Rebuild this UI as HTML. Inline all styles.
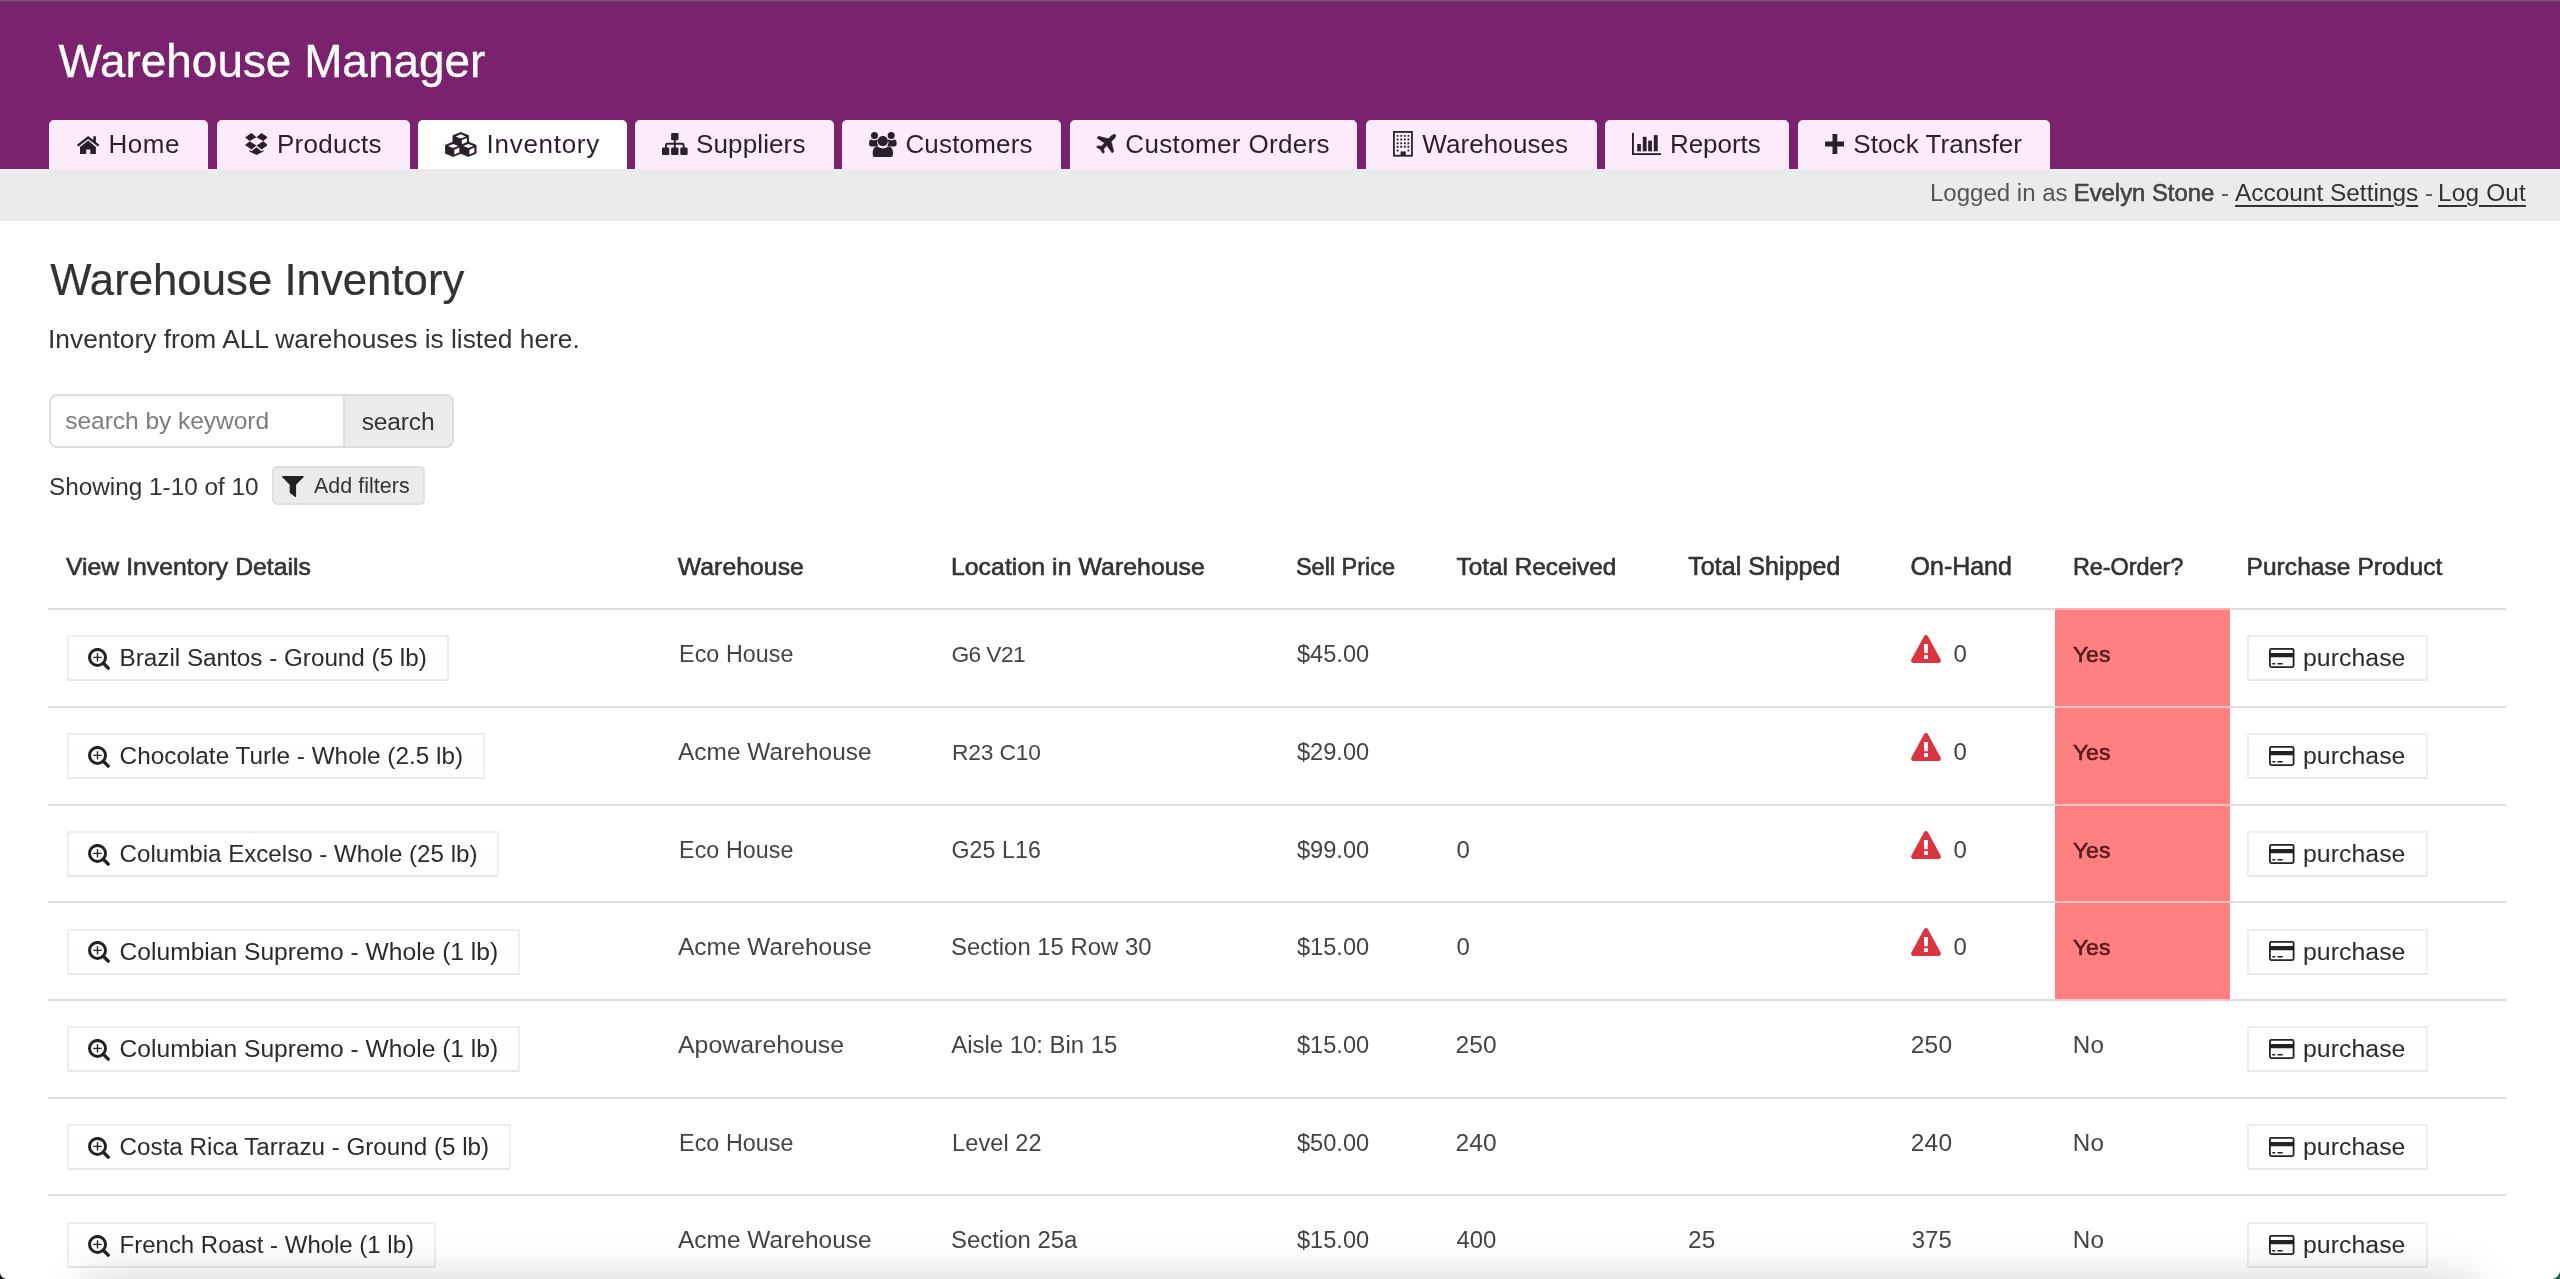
<!DOCTYPE html>
<html lang="en"><head><meta charset="utf-8"><title>Warehouse Manager - Warehouse Inventory</title>
<style>
html,body{margin:0;padding:0;}
body{width:2560px;height:1279px;overflow:hidden;background:#fff;position:relative;font-family:"Liberation Sans", sans-serif;color:#333;}
#page{position:absolute;left:0;top:0;width:2560px;height:1279px;overflow:hidden;will-change:transform;}
#hdr{position:absolute;left:0;top:0;width:2560px;height:168.5px;background:#7a226e;}
#topline{position:absolute;left:0;top:0;width:2560px;height:3px;background:linear-gradient(#765a7a 0,#765a7a 1px,#6f3565 1.5px,#73275f 2px,#7a226e 3px);}
#ubar{position:absolute;left:0;top:168.5px;width:2560px;height:52.7px;background:#ebebeb;}
.tab{position:absolute;top:119.5px;height:49.5px;background:#fbebfb;border-radius:5px 5px 0 0;color:#2b1f2b;}
.tab.on{background:#fff;}
.sb{-webkit-text-stroke:0.62px currentColor;}
.btn{position:absolute;box-sizing:border-box;height:46px;border:2px solid #eeeeee;border-bottom-color:#e8e8e8;border-radius:2px;background:linear-gradient(#fff,#fdfdfd);}
.line{position:absolute;left:48px;width:2458px;height:2px;background:#dedede;}
a{color:inherit;text-decoration:none;}
h1,h2,p{margin:0;font-weight:400;}

</style></head><body><div id="page">
<div id="hdr"></div><div id="topline"></div><div id="ubar"></div>
<h1 style="position:absolute;white-space:nowrap;left:58.40px;top:39px;font-size:45.86px;line-height:45.86px;color:#fff;letter-spacing:0.019px;-webkit-text-stroke:0.35px #fff;">Warehouse Manager</h1>
<div class="tab" style="left:49px;width:159px"></div>
<svg width="22.3" height="18.3" viewBox="0 0 22.3 18.3" style="position:absolute;left:76.9px;top:135.5px;color:#2b1f2b;"><path fill="currentColor" d="M11.15 0.1 L-0.1 8.9 L1.4 10.6 L11.15 3 L20.9 10.6 L22.4 8.9 L18.9 6.1 V0.2 H16.3 V4.1 Z"/><path fill="currentColor" d="M11.15 4.5 L3 10.9 V17.5 Q3 18.3 3.8 18.3 H9.2 V13.6 H13.3 V18.3 H18.1 Q18.9 18.3 18.9 17.5 V10.9 Z"/></svg>
<a style="position:absolute;white-space:nowrap;left:108.60px;top:131px;font-size:26.0px;line-height:26.0px;color:#2b1f2b;letter-spacing:0.5px;">Home</a>
<div class="tab" style="left:216.5px;width:193.5px"></div>
<svg width="22.9" height="22" viewBox="0 0 22.9 22" style="position:absolute;left:244.5px;top:133.3px;color:#2b1f2b;"><path fill="currentColor" d="M6.4 0 L0 4.4 L4.7 8.1 L11.45 4.2 Z M16.5 0 L22.9 4.4 L18.2 8.1 L11.45 4.2 Z M0 12 L4.7 8.3 L11.45 12.6 L6.4 16.6 Z M22.9 12 L18.2 8.3 L11.45 12.6 L16.5 16.6 Z M11.45 14.2 L6.5 18.2 L4.4 16.9 V18.4 L11.45 22 L18.5 18.4 V16.9 L16.4 18.2 Z"/></svg>
<a style="position:absolute;white-space:nowrap;left:277.00px;top:131px;font-size:26.0px;line-height:26.0px;color:#2b1f2b;letter-spacing:0.256px;">Products</a>
<div class="tab on" style="left:418px;width:209px"></div>
<svg width="31.5" height="25" viewBox="0 0 31.5 25" style="position:absolute;left:445.2px;top:131.8px;color:#2b1f2b;"><polygon fill="currentColor" stroke="currentColor" stroke-width="0.8" stroke-linejoin="round" points="15.75,0.40 23.55,3.60 23.55,11.70 15.75,15.00 7.95,11.70 7.95,3.60"/><polygon fill="#fff" points="15.75,2.30 20.85,4.40 15.75,6.50 10.65,4.40"/><polygon fill="#fff" points="16.85,8.10 21.85,6.00 21.85,10.70 16.85,12.90"/><polygon fill="currentColor" stroke="currentColor" stroke-width="0.8" stroke-linejoin="round" points="8.20,10.00 16.00,13.20 16.00,21.30 8.20,24.60 0.40,21.30 0.40,13.20"/><polygon fill="#fff" points="8.20,11.90 13.30,14.00 8.20,16.10 3.10,14.00"/><polygon fill="#fff" points="9.30,17.70 14.30,15.60 14.30,20.30 9.30,22.50"/><polygon fill="currentColor" stroke="currentColor" stroke-width="0.8" stroke-linejoin="round" points="23.30,10.00 31.10,13.20 31.10,21.30 23.30,24.60 15.50,21.30 15.50,13.20"/><polygon fill="#fff" points="23.30,11.90 28.40,14.00 23.30,16.10 18.20,14.00"/><polygon fill="#fff" points="24.40,17.70 29.40,15.60 29.40,20.30 24.40,22.50"/></svg>
<a style="position:absolute;white-space:nowrap;left:486.60px;top:131px;font-size:26.0px;line-height:26.0px;color:#2b1f2b;letter-spacing:0.706px;">Inventory</a>
<div class="tab" style="left:635px;width:199px"></div>
<svg width="25.6" height="21.9" viewBox="0 0 25.6 21.9" style="position:absolute;left:662.1px;top:133.4px;color:#2b1f2b;"><g fill="currentColor"><rect x="9.1" y="0" width="7.4" height="7.3" rx="1.2"/><rect x="0" y="14.6" width="7.3" height="7.3" rx="1.2"/><rect x="9.1" y="14.6" width="7.4" height="7.3" rx="1.2"/><rect x="18.3" y="14.6" width="7.3" height="7.3" rx="1.2"/></g><path fill="none" stroke="currentColor" stroke-width="1.9" d="M12.8 7 V15 M3.95 15 V12.2 Q3.95 10.8 5.3 10.8 H20.3 Q21.65 10.8 21.65 12.2 V15"/></svg>
<a style="position:absolute;white-space:nowrap;left:696.10px;top:131px;font-size:26.0px;line-height:26.0px;color:#2b1f2b;letter-spacing:0.112px;">Suppliers</a>
<div class="tab" style="left:842px;width:219px"></div>
<svg width="27.7" height="25.4" viewBox="0 0 27.7 25.4" style="position:absolute;left:869.1px;top:131.6px;color:#2b1f2b;"><g fill="currentColor"><circle cx="5.5" cy="3.6" r="3.5"/><circle cx="22.2" cy="3.6" r="3.5"/><path d="M0.1 12.6 V10.6 Q0.1 7.6 2.4 7.4 Q5.5 9.2 8.4 7.5 L9 8 Q7.2 11.2 9.6 13.9 Q7 14.4 5.6 14.4 H2.2 Q0.1 14.4 0.1 12.6 Z"/><path d="M27.6 12.6 V10.6 Q27.6 7.6 25.3 7.4 Q22.2 9.2 19.3 7.5 L18.7 8 Q20.5 11.2 18.1 13.9 Q20.7 14.4 22.1 14.4 H25.5 Q27.6 14.4 27.6 12.6 Z"/><circle cx="13.85" cy="9.1" r="5.1"/><path d="M3.7 21.4 Q3.7 15.2 7.6 14.5 Q8.6 14.4 9.3 15.1 Q11.2 16.6 13.85 16.6 Q16.5 16.6 18.4 15.1 Q19.1 14.4 20.1 14.5 Q24 15.2 24 21.4 V22.3 Q24 25.4 20.9 25.4 H6.8 Q3.7 25.4 3.7 22.3 Z"/></g></svg>
<a style="position:absolute;white-space:nowrap;left:905.40px;top:131px;font-size:26.0px;line-height:26.0px;color:#2b1f2b;letter-spacing:0.175px;">Customers</a>
<div class="tab" style="left:1069.5px;width:287.5px"></div>
<svg width="20" height="20" viewBox="0 0 20 20" style="position:absolute;left:1096.3px;top:133.5px;color:#2b1f2b;"><path fill="currentColor" stroke="currentColor" stroke-width="0.6" stroke-linejoin="round" d="M19.4 0.6 Q17.4 -0.2 15.2 1.9 L12.5 4.8 L2.6 2.3 L1 3.9 L8.6 9 L5.3 12.3 L1.8 11.8 L0.5 13.1 L4.4 15.6 L6.9 19.5 L8.2 18.2 L7.7 14.7 L11 11.4 L16.1 19 L17.7 17.4 L15.2 7.5 L18.1 4.8 Q20.2 2.6 19.4 0.6 Z"/></svg>
<a style="position:absolute;white-space:nowrap;left:1125.30px;top:131px;font-size:26.0px;line-height:26.0px;color:#2b1f2b;letter-spacing:0.351px;">Customer Orders</a>
<div class="tab" style="left:1365.5px;width:231.0px"></div>
<svg width="19.9" height="25.7" viewBox="0 0 19.9 25.7" style="position:absolute;left:1393.2px;top:131.3px;color:#2b1f2b;"><rect x="0.95" y="0.95" width="18" height="23.8" fill="#fdf5fd" stroke="currentColor" stroke-width="1.8"/><g fill="currentColor"><rect x="3.65" y="3.95" width="1.9" height="1.9" rx="0.5"/><rect x="7.25" y="3.95" width="1.9" height="1.9" rx="0.5"/><rect x="10.85" y="3.95" width="1.9" height="1.9" rx="0.5"/><rect x="14.45" y="3.95" width="1.9" height="1.9" rx="0.5"/><rect x="3.65" y="7.60" width="1.9" height="1.9" rx="0.5"/><rect x="7.25" y="7.60" width="1.9" height="1.9" rx="0.5"/><rect x="10.85" y="7.60" width="1.9" height="1.9" rx="0.5"/><rect x="14.45" y="7.60" width="1.9" height="1.9" rx="0.5"/><rect x="3.65" y="11.25" width="1.9" height="1.9" rx="0.5"/><rect x="7.25" y="11.25" width="1.9" height="1.9" rx="0.5"/><rect x="10.85" y="11.25" width="1.9" height="1.9" rx="0.5"/><rect x="14.45" y="11.25" width="1.9" height="1.9" rx="0.5"/><rect x="3.65" y="14.85" width="1.9" height="1.9" rx="0.5"/><rect x="7.25" y="14.85" width="1.9" height="1.9" rx="0.5"/><rect x="10.85" y="14.85" width="1.9" height="1.9" rx="0.5"/><rect x="14.45" y="14.85" width="1.9" height="1.9" rx="0.5"/><rect x="3.65" y="18.55" width="1.9" height="1.9" rx="0.5"/><rect x="14.45" y="18.55" width="1.9" height="1.9" rx="0.5"/><rect x="7.6" y="20.4" width="5.2" height="4.6"/></g></svg>
<a style="position:absolute;white-space:nowrap;left:1422.30px;top:131px;font-size:26.0px;line-height:26.0px;color:#2b1f2b;letter-spacing:0.089px;">Warehouses</a>
<div class="tab" style="left:1604.5px;width:184.5px"></div>
<svg width="29" height="22" viewBox="0 0 29 22" style="position:absolute;left:1631.9px;top:133.2px;color:#2b1f2b;"><g fill="currentColor"><rect x="0" y="0" width="1.9" height="22"/><rect x="0" y="20.2" width="29" height="1.8"/><rect x="5.2" y="11" width="3.7" height="7.3"/><rect x="10.8" y="3.8" width="3.8" height="14.5"/><rect x="16.2" y="7.6" width="3.7" height="10.7"/><rect x="21.8" y="2.1" width="3.9" height="16.2"/></g></svg>
<a style="position:absolute;white-space:nowrap;left:1669.90px;top:131px;font-size:26.0px;line-height:26.0px;color:#2b1f2b;letter-spacing:-0.024px;">Reports</a>
<div class="tab" style="left:1797.5px;width:252.5px"></div>
<svg width="19.8" height="20" viewBox="0 0 20 20" style="position:absolute;left:1824.5px;top:133.8px;color:#2b1f2b;"><path fill="currentColor" d="M7.6 0 H12.4 V7.6 H20 V12.4 H12.4 V20 H7.6 V12.4 H0 V7.6 H7.6 Z"/></svg>
<a style="position:absolute;white-space:nowrap;left:1853.30px;top:131px;font-size:26.0px;line-height:26.0px;color:#2b1f2b;letter-spacing:0.079px;">Stock Transfer</a>
<div style="position:absolute;white-space:nowrap;left:1930.00px;top:181px;font-size:24.05px;line-height:24.05px;color:#555;letter-spacing:-0.009px;">Logged in as</div>
<div class="sb" style="position:absolute;white-space:nowrap;left:2073.80px;top:181px;font-size:23.85px;line-height:23.85px;color:#444;letter-spacing:-0.005px;">Evelyn Stone</div>
<div style="position:absolute;white-space:nowrap;left:2221.00px;top:181px;font-size:24.2px;line-height:24.2px;color:#555;">-</div>
<div style="position:absolute;white-space:nowrap;left:2235.00px;top:181px;font-size:24.41px;line-height:24.41px;color:#333;letter-spacing:0.003px;"><a style="text-decoration:underline;text-decoration-thickness:1.6px;text-underline-offset:3.5px">Account Settings</a></div>
<div style="position:absolute;white-space:nowrap;left:2425.00px;top:181px;font-size:24.2px;line-height:24.2px;color:#555;">-</div>
<div style="position:absolute;white-space:nowrap;left:2438.00px;top:181px;font-size:24.39px;line-height:24.39px;color:#333;letter-spacing:0.173px;"><a style="text-decoration:underline;text-decoration-thickness:1.6px;text-underline-offset:3.5px">Log Out</a></div>
<h2 style="position:absolute;white-space:nowrap;left:50.20px;top:258px;font-size:43.68px;line-height:43.68px;color:#333;letter-spacing:0.036px;-webkit-text-stroke:0.2px #333;">Warehouse Inventory</h2>
<p style="position:absolute;white-space:nowrap;left:48.00px;top:326px;font-size:26.33px;line-height:26.33px;color:#333;letter-spacing:0.002px;">Inventory from ALL warehouses is listed here.</p>
<div style="position:absolute;left:49px;top:393.5px;width:405px;height:54.5px;box-sizing:border-box;border:2px solid #dedede;border-radius:8px;background:#fff;box-shadow:inset 0 2px 2px rgba(0,0,0,.04)"></div>
<div style="position:absolute;left:343px;top:393.5px;width:111px;height:54.5px;box-sizing:border-box;border:2px solid #dedede;border-radius:0 8px 8px 0;background:#ebebeb"></div>
<div style="position:absolute;white-space:nowrap;left:65.20px;top:409px;font-size:24.57px;line-height:24.57px;color:#7d7d7d;letter-spacing:-0.051px;">search by keyword</div>
<div style="position:absolute;white-space:nowrap;left:361.70px;top:410px;font-size:24.59px;line-height:24.59px;color:#333;letter-spacing:-0.162px;">search</div>
<div style="position:absolute;white-space:nowrap;left:49.00px;top:475px;font-size:24.32px;line-height:24.32px;color:#333;">Showing 1-10 of 10</div>
<div style="position:absolute;left:272px;top:465.5px;width:153px;height:39px;box-sizing:border-box;border:2px solid #e0e0e0;border-radius:5px;background:#ebebeb"></div>
<svg width="21.8" height="21.1" viewBox="0 0 21.8 21.1" style="position:absolute;left:282.4px;top:476px;"><path fill="#222" d="M0.6 0 H21.2 Q22.2 0.3 21.5 1.2 L14.1 8.8 V20.4 Q13.9 21.4 13 20.8 L8 16.9 Q7.7 16.6 7.7 16.2 V8.8 L0.3 1.2 Q-0.4 0.3 0.6 0 Z"/></svg>
<div style="position:absolute;white-space:nowrap;left:314.00px;top:476px;font-size:21.42px;line-height:21.42px;color:#333;letter-spacing:0.052px;">Add filters</div>
<div class="sb" style="position:absolute;white-space:nowrap;left:65.90px;top:555px;font-size:24.78px;line-height:24.78px;color:#333;letter-spacing:0.025px;">View Inventory Details</div>
<div class="sb" style="position:absolute;white-space:nowrap;left:677.80px;top:555px;font-size:24.75px;line-height:24.75px;color:#333;letter-spacing:0.051px;">Warehouse</div>
<div class="sb" style="position:absolute;white-space:nowrap;left:950.90px;top:555px;font-size:24.78px;line-height:24.78px;color:#333;letter-spacing:0.078px;">Location in Warehouse</div>
<div class="sb" style="position:absolute;white-space:nowrap;left:1295.90px;top:556px;font-size:23.54px;line-height:23.54px;color:#333;letter-spacing:-0.023px;">Sell Price</div>
<div class="sb" style="position:absolute;white-space:nowrap;left:1456.50px;top:555px;font-size:24.33px;line-height:24.33px;color:#333;letter-spacing:0.012px;">Total Received</div>
<div class="sb" style="position:absolute;white-space:nowrap;left:1688.30px;top:554px;font-size:24.96px;line-height:24.96px;color:#333;letter-spacing:0.072px;">Total Shipped</div>
<div class="sb" style="position:absolute;white-space:nowrap;left:1910.60px;top:554px;font-size:24.96px;line-height:24.96px;color:#333;letter-spacing:0.002px;">On-Hand</div>
<div class="sb" style="position:absolute;white-space:nowrap;left:2072.90px;top:556px;font-size:23.44px;line-height:23.44px;color:#333;letter-spacing:-0.035px;">Re-Order?</div>
<div class="sb" style="position:absolute;white-space:nowrap;left:2246.50px;top:555px;font-size:24.49px;line-height:24.49px;color:#333;letter-spacing:0.079px;">Purchase Product</div>
<div style="position:absolute;left:2055px;top:609px;width:175px;height:390.00px;background:#ff8080"></div>
<div class="line" style="top:608px"></div>
<div style="position:absolute;left:2055px;top:608px;width:175px;height:2px;background:#ffb0b0"></div>
<div class="line" style="top:706px"></div>
<div style="position:absolute;left:2055px;top:706px;width:175px;height:2px;background:#ffc4c4"></div>
<div class="line" style="top:804px"></div>
<div style="position:absolute;left:2055px;top:804px;width:175px;height:2px;background:#ffc4c4"></div>
<div class="line" style="top:901px"></div>
<div style="position:absolute;left:2055px;top:901px;width:175px;height:2px;background:#ffc4c4"></div>
<div class="line" style="top:999px"></div>
<div style="position:absolute;left:2055px;top:999px;width:175px;height:2px;background:#ffc4c4"></div>
<div class="line" style="top:1097px"></div>
<div class="line" style="top:1194px"></div>
<div class="line" style="top:1292px"></div>
<div class="btn" style="left:67px;top:635px;width:382px"></div>
<svg width="22" height="22" viewBox="0 0 22 22" style="position:absolute;left:88px;top:648.00px;"><circle cx="9.5" cy="9.4" r="8" fill="none" stroke="#222" stroke-width="3"/><path d="M15.4 15.3 L20.2 20.1" stroke="#222" stroke-width="3.4" stroke-linecap="round"/><path d="M9.5 5.2 V13.6 M5.3 9.4 H13.7" stroke="#222" stroke-width="1.4"/></svg>
<a style="position:absolute;white-space:nowrap;left:119.60px;top:646px;font-size:24.25px;line-height:24.25px;color:#2b2b2b;letter-spacing:-0.003px;">Brazil Santos - Ground (5 lb)</a>
<div style="position:absolute;white-space:nowrap;left:679.10px;top:643px;font-size:23.24px;line-height:23.24px;color:#444;letter-spacing:0.083px;">Eco House</div>
<div style="position:absolute;white-space:nowrap;left:951.50px;top:643px;font-size:22.8px;line-height:22.8px;color:#444;letter-spacing:-0.627px;">G6 V21</div>
<div style="position:absolute;white-space:nowrap;left:1297.00px;top:643px;font-size:23.65px;line-height:23.65px;color:#444;letter-spacing:-0.033px;">$45.00</div>
<svg width="30" height="28" viewBox="0 0 30 28" style="position:absolute;left:1911px;top:635.00px;"><path fill="#db3340" fill-rule="evenodd" d="M15 0 Q16.3 0 17 1.2 L29.6 24.6 Q30.2 25.8 29.6 26.8 Q29 28 27.6 28 H2.4 Q1 28 0.4 26.8 Q-0.2 25.8 0.4 24.6 L13 1.2 Q13.7 0 15 0 Z M12.9 9 L13.3 18.2 H16.7 L17.1 9 Z M13 20.2 V24 H17 V20.2 Z"/></svg>
<div style="position:absolute;white-space:nowrap;left:1953.40px;top:642px;font-size:24px;line-height:24px;color:#444;">0</div>
<div class="sb" style="position:absolute;white-space:nowrap;left:2072.90px;top:643px;font-size:22.98px;line-height:22.98px;color:#561a1e;">Yes</div>
<div class="btn" style="left:2247px;top:635px;width:181px"></div>
<svg width="25.5" height="20" viewBox="0 0 25.5 20" style="position:absolute;left:2269.25px;top:648.00px;"><path fill="#222" fill-rule="evenodd" d="M2.4 0 H23.1 Q25.5 0 25.5 2.4 V17.6 Q25.5 20 23.1 20 H2.4 Q0 20 0 17.6 V2.4 Q0 0 2.4 0 Z M1.8 2.4 V5 H23.7 V2.4 Q23.7 1.8 23.1 1.8 H2.4 Q1.8 1.8 1.8 2.4 Z M1.8 9.3 V17.6 Q1.8 18.2 2.4 18.2 H23.1 Q23.7 18.2 23.7 17.6 V9.3 Z M3.3 15.1 H6.3 V16.6 H3.3 Z M8.5 15.1 H13.7 V16.6 H8.5 Z"/></svg>
<a style="position:absolute;white-space:nowrap;left:2303.00px;top:646px;font-size:24.83px;line-height:24.83px;color:#2b2b2b;letter-spacing:0.038px;">purchase</a>
<div class="btn" style="left:67px;top:733px;width:418px"></div>
<svg width="22" height="22" viewBox="0 0 22 22" style="position:absolute;left:88px;top:745.75px;"><circle cx="9.5" cy="9.4" r="8" fill="none" stroke="#222" stroke-width="3"/><path d="M15.4 15.3 L20.2 20.1" stroke="#222" stroke-width="3.4" stroke-linecap="round"/><path d="M9.5 5.2 V13.6 M5.3 9.4 H13.7" stroke="#222" stroke-width="1.4"/></svg>
<a style="position:absolute;white-space:nowrap;left:119.60px;top:744px;font-size:24.34px;line-height:24.34px;color:#2b2b2b;letter-spacing:0.002px;">Chocolate Turle - Whole (2.5 lb)</a>
<div style="position:absolute;white-space:nowrap;left:678.00px;top:740px;font-size:24.44px;line-height:24.44px;color:#444;letter-spacing:0.02px;">Acme Warehouse</div>
<div style="position:absolute;white-space:nowrap;left:952.10px;top:741px;font-size:22.8px;line-height:22.8px;color:#444;letter-spacing:-0.184px;">R23 C10</div>
<div style="position:absolute;white-space:nowrap;left:1297.00px;top:741px;font-size:23.65px;line-height:23.65px;color:#444;letter-spacing:-0.033px;">$29.00</div>
<svg width="30" height="28" viewBox="0 0 30 28" style="position:absolute;left:1911px;top:732.75px;"><path fill="#db3340" fill-rule="evenodd" d="M15 0 Q16.3 0 17 1.2 L29.6 24.6 Q30.2 25.8 29.6 26.8 Q29 28 27.6 28 H2.4 Q1 28 0.4 26.8 Q-0.2 25.8 0.4 24.6 L13 1.2 Q13.7 0 15 0 Z M12.9 9 L13.3 18.2 H16.7 L17.1 9 Z M13 20.2 V24 H17 V20.2 Z"/></svg>
<div style="position:absolute;white-space:nowrap;left:1953.40px;top:740px;font-size:24px;line-height:24px;color:#444;">0</div>
<div class="sb" style="position:absolute;white-space:nowrap;left:2072.90px;top:741px;font-size:22.98px;line-height:22.98px;color:#561a1e;">Yes</div>
<div class="btn" style="left:2247px;top:733px;width:181px"></div>
<svg width="25.5" height="20" viewBox="0 0 25.5 20" style="position:absolute;left:2269.25px;top:745.75px;"><path fill="#222" fill-rule="evenodd" d="M2.4 0 H23.1 Q25.5 0 25.5 2.4 V17.6 Q25.5 20 23.1 20 H2.4 Q0 20 0 17.6 V2.4 Q0 0 2.4 0 Z M1.8 2.4 V5 H23.7 V2.4 Q23.7 1.8 23.1 1.8 H2.4 Q1.8 1.8 1.8 2.4 Z M1.8 9.3 V17.6 Q1.8 18.2 2.4 18.2 H23.1 Q23.7 18.2 23.7 17.6 V9.3 Z M3.3 15.1 H6.3 V16.6 H3.3 Z M8.5 15.1 H13.7 V16.6 H8.5 Z"/></svg>
<a style="position:absolute;white-space:nowrap;left:2303.00px;top:744px;font-size:24.83px;line-height:24.83px;color:#2b2b2b;letter-spacing:0.038px;">purchase</a>
<div class="btn" style="left:67px;top:831px;width:432px"></div>
<svg width="22" height="22" viewBox="0 0 22 22" style="position:absolute;left:88px;top:843.50px;"><circle cx="9.5" cy="9.4" r="8" fill="none" stroke="#222" stroke-width="3"/><path d="M15.4 15.3 L20.2 20.1" stroke="#222" stroke-width="3.4" stroke-linecap="round"/><path d="M9.5 5.2 V13.6 M5.3 9.4 H13.7" stroke="#222" stroke-width="1.4"/></svg>
<a style="position:absolute;white-space:nowrap;left:119.60px;top:842px;font-size:24.13px;line-height:24.13px;color:#2b2b2b;letter-spacing:-0.005px;">Columbia Excelso - Whole (25 lb)</a>
<div style="position:absolute;white-space:nowrap;left:679.10px;top:839px;font-size:23.24px;line-height:23.24px;color:#444;letter-spacing:0.083px;">Eco House</div>
<div style="position:absolute;white-space:nowrap;left:951.50px;top:839px;font-size:23.15px;line-height:23.15px;color:#444;letter-spacing:0.098px;">G25 L16</div>
<div style="position:absolute;white-space:nowrap;left:1297.00px;top:839px;font-size:23.65px;line-height:23.65px;color:#444;letter-spacing:-0.033px;">$99.00</div>
<div style="position:absolute;white-space:nowrap;left:1456.40px;top:838px;font-size:24px;line-height:24px;color:#444;">0</div>
<svg width="30" height="28" viewBox="0 0 30 28" style="position:absolute;left:1911px;top:830.50px;"><path fill="#db3340" fill-rule="evenodd" d="M15 0 Q16.3 0 17 1.2 L29.6 24.6 Q30.2 25.8 29.6 26.8 Q29 28 27.6 28 H2.4 Q1 28 0.4 26.8 Q-0.2 25.8 0.4 24.6 L13 1.2 Q13.7 0 15 0 Z M12.9 9 L13.3 18.2 H16.7 L17.1 9 Z M13 20.2 V24 H17 V20.2 Z"/></svg>
<div style="position:absolute;white-space:nowrap;left:1953.40px;top:838px;font-size:24px;line-height:24px;color:#444;">0</div>
<div class="sb" style="position:absolute;white-space:nowrap;left:2072.90px;top:839px;font-size:22.98px;line-height:22.98px;color:#561a1e;">Yes</div>
<div class="btn" style="left:2247px;top:831px;width:181px"></div>
<svg width="25.5" height="20" viewBox="0 0 25.5 20" style="position:absolute;left:2269.25px;top:843.50px;"><path fill="#222" fill-rule="evenodd" d="M2.4 0 H23.1 Q25.5 0 25.5 2.4 V17.6 Q25.5 20 23.1 20 H2.4 Q0 20 0 17.6 V2.4 Q0 0 2.4 0 Z M1.8 2.4 V5 H23.7 V2.4 Q23.7 1.8 23.1 1.8 H2.4 Q1.8 1.8 1.8 2.4 Z M1.8 9.3 V17.6 Q1.8 18.2 2.4 18.2 H23.1 Q23.7 18.2 23.7 17.6 V9.3 Z M3.3 15.1 H6.3 V16.6 H3.3 Z M8.5 15.1 H13.7 V16.6 H8.5 Z"/></svg>
<a style="position:absolute;white-space:nowrap;left:2303.00px;top:842px;font-size:24.83px;line-height:24.83px;color:#2b2b2b;letter-spacing:0.038px;">purchase</a>
<div class="btn" style="left:67px;top:929px;width:453px"></div>
<svg width="22" height="22" viewBox="0 0 22 22" style="position:absolute;left:88px;top:941.25px;"><circle cx="9.5" cy="9.4" r="8" fill="none" stroke="#222" stroke-width="3"/><path d="M15.4 15.3 L20.2 20.1" stroke="#222" stroke-width="3.4" stroke-linecap="round"/><path d="M9.5 5.2 V13.6 M5.3 9.4 H13.7" stroke="#222" stroke-width="1.4"/></svg>
<a style="position:absolute;white-space:nowrap;left:119.60px;top:940px;font-size:24.6px;line-height:24.6px;color:#2b2b2b;letter-spacing:-0.001px;">Columbian Supremo - Whole (1 lb)</a>
<div style="position:absolute;white-space:nowrap;left:678.00px;top:935px;font-size:24.44px;line-height:24.44px;color:#444;letter-spacing:0.02px;">Acme Warehouse</div>
<div style="position:absolute;white-space:nowrap;left:951.00px;top:935px;font-size:23.9px;line-height:23.9px;color:#444;letter-spacing:-0.001px;">Section 15 Row 30</div>
<div style="position:absolute;white-space:nowrap;left:1297.00px;top:936px;font-size:23.65px;line-height:23.65px;color:#444;letter-spacing:-0.033px;">$15.00</div>
<div style="position:absolute;white-space:nowrap;left:1456.40px;top:935px;font-size:24px;line-height:24px;color:#444;">0</div>
<svg width="30" height="28" viewBox="0 0 30 28" style="position:absolute;left:1911px;top:928.25px;"><path fill="#db3340" fill-rule="evenodd" d="M15 0 Q16.3 0 17 1.2 L29.6 24.6 Q30.2 25.8 29.6 26.8 Q29 28 27.6 28 H2.4 Q1 28 0.4 26.8 Q-0.2 25.8 0.4 24.6 L13 1.2 Q13.7 0 15 0 Z M12.9 9 L13.3 18.2 H16.7 L17.1 9 Z M13 20.2 V24 H17 V20.2 Z"/></svg>
<div style="position:absolute;white-space:nowrap;left:1953.40px;top:935px;font-size:24px;line-height:24px;color:#444;">0</div>
<div class="sb" style="position:absolute;white-space:nowrap;left:2072.90px;top:936px;font-size:22.98px;line-height:22.98px;color:#561a1e;">Yes</div>
<div class="btn" style="left:2247px;top:929px;width:181px"></div>
<svg width="25.5" height="20" viewBox="0 0 25.5 20" style="position:absolute;left:2269.25px;top:941.25px;"><path fill="#222" fill-rule="evenodd" d="M2.4 0 H23.1 Q25.5 0 25.5 2.4 V17.6 Q25.5 20 23.1 20 H2.4 Q0 20 0 17.6 V2.4 Q0 0 2.4 0 Z M1.8 2.4 V5 H23.7 V2.4 Q23.7 1.8 23.1 1.8 H2.4 Q1.8 1.8 1.8 2.4 Z M1.8 9.3 V17.6 Q1.8 18.2 2.4 18.2 H23.1 Q23.7 18.2 23.7 17.6 V9.3 Z M3.3 15.1 H6.3 V16.6 H3.3 Z M8.5 15.1 H13.7 V16.6 H8.5 Z"/></svg>
<a style="position:absolute;white-space:nowrap;left:2303.00px;top:940px;font-size:24.83px;line-height:24.83px;color:#2b2b2b;letter-spacing:0.038px;">purchase</a>
<div class="btn" style="left:67px;top:1026px;width:453px"></div>
<svg width="22" height="22" viewBox="0 0 22 22" style="position:absolute;left:88px;top:1039.00px;"><circle cx="9.5" cy="9.4" r="8" fill="none" stroke="#222" stroke-width="3"/><path d="M15.4 15.3 L20.2 20.1" stroke="#222" stroke-width="3.4" stroke-linecap="round"/><path d="M9.5 5.2 V13.6 M5.3 9.4 H13.7" stroke="#222" stroke-width="1.4"/></svg>
<a style="position:absolute;white-space:nowrap;left:119.60px;top:1037px;font-size:24.6px;line-height:24.6px;color:#2b2b2b;letter-spacing:-0.001px;">Columbian Supremo - Whole (1 lb)</a>
<div style="position:absolute;white-space:nowrap;left:678.00px;top:1033px;font-size:24.82px;line-height:24.82px;color:#444;letter-spacing:0.046px;">Apowarehouse</div>
<div style="position:absolute;white-space:nowrap;left:951.20px;top:1033px;font-size:23.91px;line-height:23.91px;color:#444;letter-spacing:-0.002px;">Aisle 10: Bin 15</div>
<div style="position:absolute;white-space:nowrap;left:1297.00px;top:1034px;font-size:23.65px;line-height:23.65px;color:#444;letter-spacing:-0.033px;">$15.00</div>
<div style="position:absolute;white-space:nowrap;left:1455.40px;top:1033px;font-size:24.56px;line-height:24.56px;color:#444;letter-spacing:0.142px;">250</div>
<div style="position:absolute;white-space:nowrap;left:1910.80px;top:1033px;font-size:24.56px;line-height:24.56px;color:#444;letter-spacing:0.142px;">250</div>
<div style="position:absolute;white-space:nowrap;left:2072.80px;top:1033px;font-size:24.21px;line-height:24.21px;color:#444;letter-spacing:0.108px;">No</div>
<div class="btn" style="left:2247px;top:1026px;width:181px"></div>
<svg width="25.5" height="20" viewBox="0 0 25.5 20" style="position:absolute;left:2269.25px;top:1039.00px;"><path fill="#222" fill-rule="evenodd" d="M2.4 0 H23.1 Q25.5 0 25.5 2.4 V17.6 Q25.5 20 23.1 20 H2.4 Q0 20 0 17.6 V2.4 Q0 0 2.4 0 Z M1.8 2.4 V5 H23.7 V2.4 Q23.7 1.8 23.1 1.8 H2.4 Q1.8 1.8 1.8 2.4 Z M1.8 9.3 V17.6 Q1.8 18.2 2.4 18.2 H23.1 Q23.7 18.2 23.7 17.6 V9.3 Z M3.3 15.1 H6.3 V16.6 H3.3 Z M8.5 15.1 H13.7 V16.6 H8.5 Z"/></svg>
<a style="position:absolute;white-space:nowrap;left:2303.00px;top:1037px;font-size:24.83px;line-height:24.83px;color:#2b2b2b;letter-spacing:0.038px;">purchase</a>
<div class="btn" style="left:67px;top:1124px;width:444px"></div>
<svg width="22" height="22" viewBox="0 0 22 22" style="position:absolute;left:88px;top:1136.75px;"><circle cx="9.5" cy="9.4" r="8" fill="none" stroke="#222" stroke-width="3"/><path d="M15.4 15.3 L20.2 20.1" stroke="#222" stroke-width="3.4" stroke-linecap="round"/><path d="M9.5 5.2 V13.6 M5.3 9.4 H13.7" stroke="#222" stroke-width="1.4"/></svg>
<a style="position:absolute;white-space:nowrap;left:119.60px;top:1135px;font-size:24.21px;line-height:24.21px;color:#2b2b2b;">Costa Rica Tarrazu - Ground (5 lb)</a>
<div style="position:absolute;white-space:nowrap;left:679.10px;top:1132px;font-size:23.24px;line-height:23.24px;color:#444;letter-spacing:0.083px;">Eco House</div>
<div style="position:absolute;white-space:nowrap;left:952.10px;top:1132px;font-size:23.46px;line-height:23.46px;color:#444;letter-spacing:0.11px;">Level 22</div>
<div style="position:absolute;white-space:nowrap;left:1297.00px;top:1132px;font-size:23.65px;line-height:23.65px;color:#444;letter-spacing:-0.033px;">$50.00</div>
<div style="position:absolute;white-space:nowrap;left:1455.40px;top:1131px;font-size:24.56px;line-height:24.56px;color:#444;letter-spacing:0.142px;">240</div>
<div style="position:absolute;white-space:nowrap;left:1910.80px;top:1131px;font-size:24.56px;line-height:24.56px;color:#444;letter-spacing:0.142px;">240</div>
<div style="position:absolute;white-space:nowrap;left:2072.80px;top:1131px;font-size:24.21px;line-height:24.21px;color:#444;letter-spacing:0.108px;">No</div>
<div class="btn" style="left:2247px;top:1124px;width:181px"></div>
<svg width="25.5" height="20" viewBox="0 0 25.5 20" style="position:absolute;left:2269.25px;top:1136.75px;"><path fill="#222" fill-rule="evenodd" d="M2.4 0 H23.1 Q25.5 0 25.5 2.4 V17.6 Q25.5 20 23.1 20 H2.4 Q0 20 0 17.6 V2.4 Q0 0 2.4 0 Z M1.8 2.4 V5 H23.7 V2.4 Q23.7 1.8 23.1 1.8 H2.4 Q1.8 1.8 1.8 2.4 Z M1.8 9.3 V17.6 Q1.8 18.2 2.4 18.2 H23.1 Q23.7 18.2 23.7 17.6 V9.3 Z M3.3 15.1 H6.3 V16.6 H3.3 Z M8.5 15.1 H13.7 V16.6 H8.5 Z"/></svg>
<a style="position:absolute;white-space:nowrap;left:2303.00px;top:1135px;font-size:24.83px;line-height:24.83px;color:#2b2b2b;letter-spacing:0.038px;">purchase</a>
<div class="btn" style="left:67px;top:1222px;width:369px"></div>
<svg width="22" height="22" viewBox="0 0 22 22" style="position:absolute;left:88px;top:1234.50px;"><circle cx="9.5" cy="9.4" r="8" fill="none" stroke="#222" stroke-width="3"/><path d="M15.4 15.3 L20.2 20.1" stroke="#222" stroke-width="3.4" stroke-linecap="round"/><path d="M9.5 5.2 V13.6 M5.3 9.4 H13.7" stroke="#222" stroke-width="1.4"/></svg>
<a style="position:absolute;white-space:nowrap;left:119.60px;top:1233px;font-size:23.98px;line-height:23.98px;color:#2b2b2b;">French Roast - Whole (1 lb)</a>
<div style="position:absolute;white-space:nowrap;left:678.00px;top:1228px;font-size:24.44px;line-height:24.44px;color:#444;letter-spacing:0.02px;">Acme Warehouse</div>
<div style="position:absolute;white-space:nowrap;left:951.00px;top:1228px;font-size:23.92px;line-height:23.92px;color:#444;letter-spacing:0.001px;">Section 25a</div>
<div style="position:absolute;white-space:nowrap;left:1297.00px;top:1229px;font-size:23.65px;line-height:23.65px;color:#444;letter-spacing:-0.033px;">$15.00</div>
<div style="position:absolute;white-space:nowrap;left:1456.40px;top:1228px;font-size:23.94px;line-height:23.94px;color:#444;letter-spacing:-0.02px;">400</div>
<div style="position:absolute;white-space:nowrap;left:1688.00px;top:1228px;font-size:24.33px;line-height:24.33px;color:#444;letter-spacing:0.168px;">25</div>
<div style="position:absolute;white-space:nowrap;left:1911.80px;top:1228px;font-size:23.94px;line-height:23.94px;color:#444;letter-spacing:-0.02px;">375</div>
<div style="position:absolute;white-space:nowrap;left:2072.80px;top:1228px;font-size:24.21px;line-height:24.21px;color:#444;letter-spacing:0.108px;">No</div>
<div class="btn" style="left:2247px;top:1222px;width:181px"></div>
<svg width="25.5" height="20" viewBox="0 0 25.5 20" style="position:absolute;left:2269.25px;top:1234.50px;"><path fill="#222" fill-rule="evenodd" d="M2.4 0 H23.1 Q25.5 0 25.5 2.4 V17.6 Q25.5 20 23.1 20 H2.4 Q0 20 0 17.6 V2.4 Q0 0 2.4 0 Z M1.8 2.4 V5 H23.7 V2.4 Q23.7 1.8 23.1 1.8 H2.4 Q1.8 1.8 1.8 2.4 Z M1.8 9.3 V17.6 Q1.8 18.2 2.4 18.2 H23.1 Q23.7 18.2 23.7 17.6 V9.3 Z M3.3 15.1 H6.3 V16.6 H3.3 Z M8.5 15.1 H13.7 V16.6 H8.5 Z"/></svg>
<a style="position:absolute;white-space:nowrap;left:2303.00px;top:1233px;font-size:24.83px;line-height:24.83px;color:#2b2b2b;letter-spacing:0.038px;">purchase</a>
<div style="position:absolute;left:84px;top:1280px;width:2392px;height:60px;box-shadow:0 0 46px 0 rgba(0,0,0,.18)"></div>
<div style="position:absolute;left:0;top:1272px;width:7px;height:7px;background:radial-gradient(circle at 100% 0,rgba(0,0,0,0) 6.5px,#111 7.5px)"></div>
<div style="position:absolute;left:2551px;top:1270px;width:9px;height:9px;background:radial-gradient(circle at 0 0,rgba(0,0,0,0) 8.5px,#1d5f4a 9.5px)"></div>
</div></body></html>
